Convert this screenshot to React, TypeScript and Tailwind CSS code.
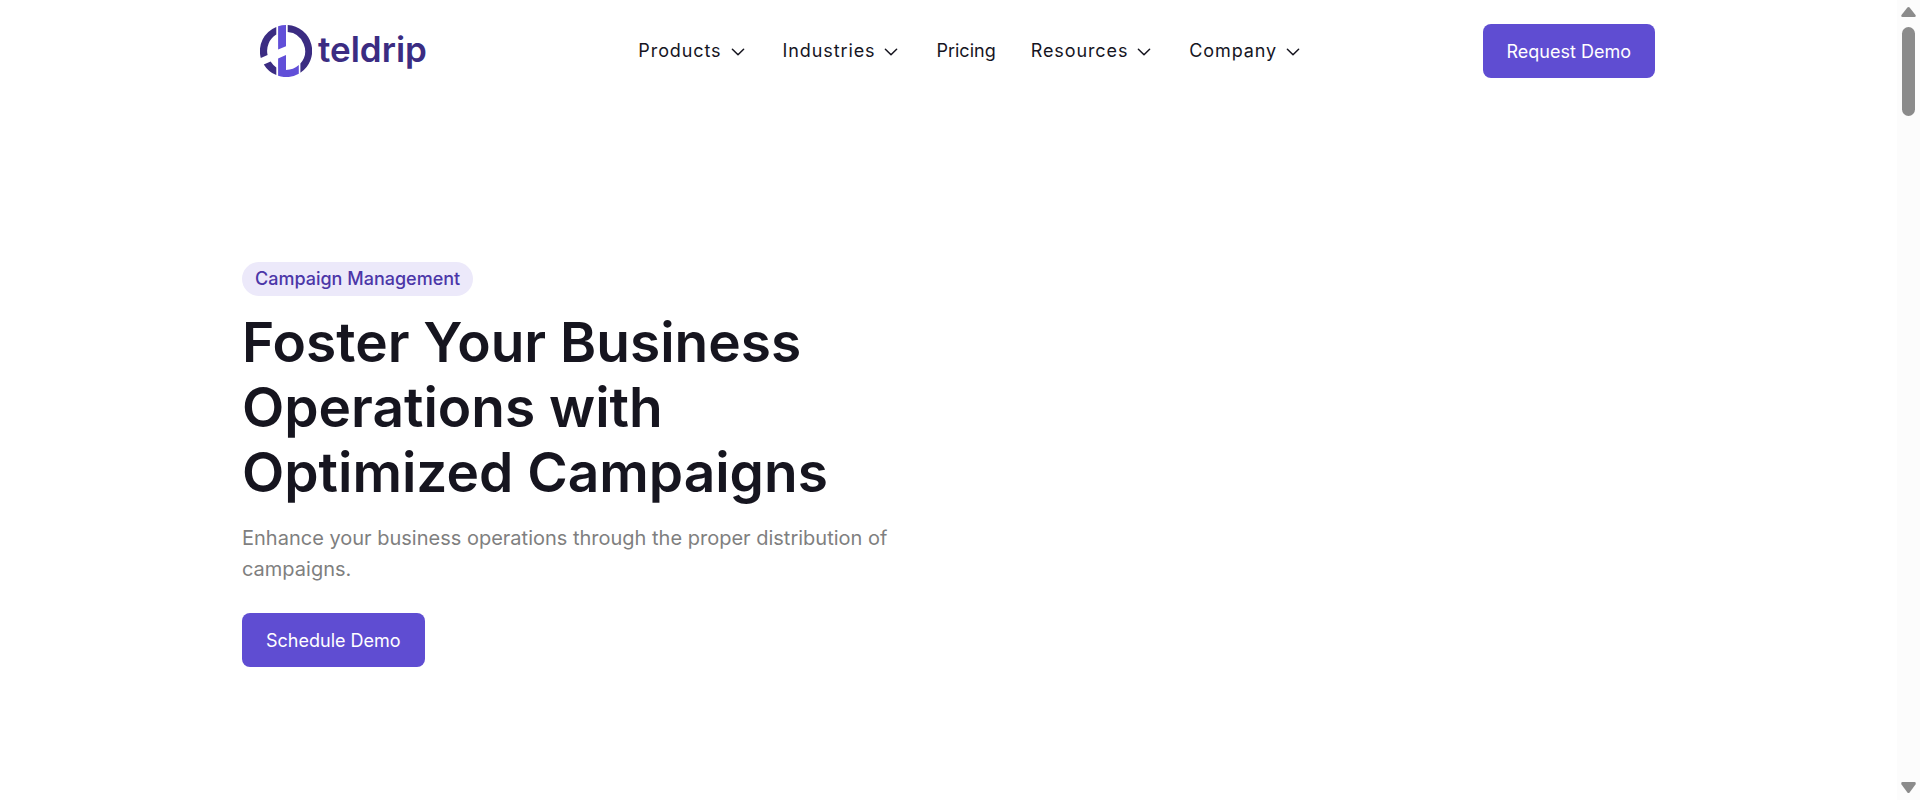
type NavItem = { label: string; menu: boolean };

const navItems: NavItem[] = [
  { label: "Products", menu: true },
  { label: "Industries", menu: true },
  { label: "Pricing", menu: false },
  { label: "Resources", menu: true },
  { label: "Company", menu: true },
];

function Chevron() {
  return (
    <svg className="size-5" viewBox="0 0 20 20" fill="none" stroke="currentColor" strokeWidth="1.5" strokeLinecap="round" strokeLinejoin="round" aria-hidden="true">
      <path d="M4.4 8.2 10 13.8 15.6 8.2" />
    </svg>
  );
}

function Logo() {
  return (
    <a href="#" className="flex items-center gap-[6px] pr-8 pl-[18px] text-[#3b2c82]">
      <svg className="size-[52px]" viewBox="0 0 52 52" aria-hidden="true">
        <g fill="#3b2c82">
          <path d="M16.3 1.9A26 26 0 0 0 .8 33L7.6 30.1A19 19 0 0 1 16.3 9.6Z" />
          <path d="M3.8 39.4 10.6 36.6A19 19 0 0 0 16.3 42.4V50.1A26 26 0 0 1 3.8 39.4Z" />
          <path d="M27.7 0A26 26 0 0 1 40.4 47.7V38.5A19 19 0 0 0 27.7 7.1Z" />
        </g>
        <g fill="#614fd8">
          <path d="M18.1 1.2A26 26 0 0 1 26 0V21.2L18.1 24.6Z" />
          <path d="M18.1 33.4 26 30V45A19 19 0 0 0 38.8 40.1V48.7A26 26 0 0 1 18.1 50.8Z" />
        </g>
      </svg>
      <span className="pb-1 text-[35px] leading-[48px] font-semibold">teldrip</span>
    </a>
  );
}

function Header() {
  return (
    <header className="flex items-center justify-between py-6">
      <Logo />
      <nav className="flex items-center gap-[35px] text-[18px] leading-6">
        {navItems.map((item) =>
          item.menu ? (
            <button key={item.label} type="button" className="flex items-center gap-[6px] tracking-wider">
              {item.label}
              <Chevron />
            </button>
          ) : (
            <a key={item.label} href="#">
              {item.label}
            </a>
          ),
        )}
      </nav>
      <button type="button" className="h-[54px] rounded-lg bg-[#5f4dd2] px-6 text-[18px] text-white">
        Request Demo
      </button>
    </header>
  );
}

function Hero() {
  return (
    <section className="flex max-w-[660px] flex-col items-start pt-40">
      <p className="rounded-full bg-[#ece9fa] px-[13px] text-[18px] leading-[34px] font-medium text-[#4b36a8]">Campaign Management</p>
      <h1 className="mt-[14px] text-[55px] leading-[65px] font-semibold">Foster Your Business Operations with Optimized Campaigns</h1>
      <p className="mt-[18px] text-[20px] leading-[31px] text-[#7f7f7f]">
        Enhance your business operations through the proper distribution of campaigns.
      </p>
      <button type="button" className="mt-7 h-[54px] rounded-lg bg-[#5f4dd2] px-6 text-[18px] text-white">
        Schedule Demo
      </button>
    </section>
  );
}

function ScrollRail() {
  return (
    <div className="flex w-[23px] shrink-0 flex-col items-center bg-[#fcfcfc] py-[7px] text-[#8b8b8b]" aria-hidden="true">
      <svg className="h-[10px] w-[15px]" viewBox="0 0 15 10" fill="currentColor">
        <path d="M6.4.6Q7.5-.6 8.6.6L14.5 8Q15.3 10 13.5 10H1.5Q-.3 10 .5 8Z" />
      </svg>
      <div className="mt-[10px] h-[89px] w-[13px] rounded-full bg-[#8b8b8b]" />
      <svg className="mt-auto h-[11px] w-[15px]" viewBox="0 0 15 11" fill="currentColor">
        <path d="M6.4 10.4Q7.5 11.6 8.6 10.4L14.5 2.4Q15.3 0 13.5 0H1.5Q-.3 0 .5 2.4Z" />
      </svg>
    </div>
  );
}

export default function App() {
  return (
    <div className="flex min-h-screen bg-white font-['Inter',sans-serif] text-[#16151f]">
      <main className="min-w-0 flex-1">
        <div className="mx-auto max-w-[1413px]">
          <Header />
          <Hero />
        </div>
      </main>
      <ScrollRail />
    </div>
  );
}
